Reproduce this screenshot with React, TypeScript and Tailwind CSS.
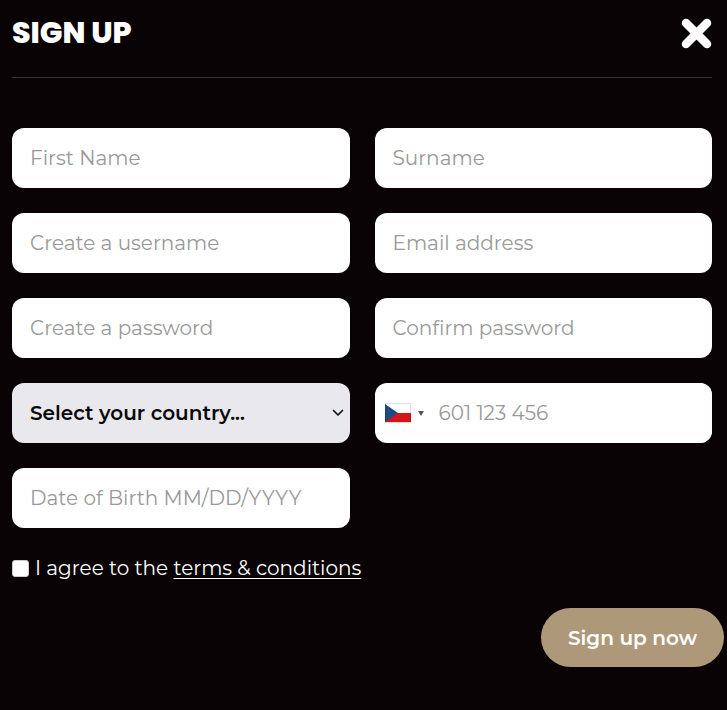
import type { InputHTMLAttributes } from "react";

const fieldClass =
  "h-[60px] w-full min-w-0 rounded-xl bg-white px-[18px] text-xl text-black outline-none placeholder:text-[#999] placeholder:opacity-100";

function Field({ label, ...rest }: { label: string } & InputHTMLAttributes<HTMLInputElement>) {
  return <input aria-label={label} placeholder={label} className={fieldClass} {...rest} />;
}

function CzechFlag() {
  return (
    <svg width="26" height="20" viewBox="0 0 26 20" aria-hidden="true">
      <rect width="26" height="20" fill="#fff" />
      <rect y="10" width="26" height="9" fill="#d7141a" />
      <path d="M0 1 L13 10 L0 19Z" fill="#1d4a80" />
      <rect x="0.5" y="0.5" width="25" height="19" fill="none" stroke="#000" strokeOpacity="0.12" />
    </svg>
  );
}

function PhoneField() {
  return (
    <div className="flex h-[60px] min-w-0 items-center rounded-xl bg-white">
      <button
        type="button"
        aria-label="Country code: Czech Republic"
        className="flex h-full shrink-0 items-center gap-[7px] pr-[15px] pl-2.5"
      >
        <CzechFlag />
        <svg width="6" height="5" viewBox="0 0 6 5" aria-hidden="true">
          <path d="M0 0H6L3 5Z" fill="#555" />
        </svg>
      </button>
      <input
        type="tel"
        aria-label="Phone number"
        placeholder="601 123 456"
        className="h-full w-full min-w-0 rounded-xl bg-white text-xl text-black outline-none placeholder:text-[#999] placeholder:opacity-100"
      />
    </div>
  );
}

export default function App() {
  return (
    <main className="min-h-screen bg-[#0a0305] pr-[15px] pl-3 font-['Montserrat','Inter',sans-serif] text-white">
      <header className="flex h-[78px] items-start justify-between border-b border-[#383335] pt-[15px]">
        <h1 className="font-['Poppins','Inter',sans-serif] text-[30px] leading-9 font-extrabold">SIGN UP</h1>
        <button type="button" aria-label="Close" className="pt-[3px]">
          <svg width="31" height="31" viewBox="0 0 31 31" aria-hidden="true">
            <path
              d="M5 5L26 26M26 5L5 26"
              stroke="#fff"
              strokeWidth="8.5"
              strokeLinecap="round"
            />
          </svg>
        </button>
      </header>

      <form className="pt-[50px]" onSubmit={(e) => e.preventDefault()}>
        <div className="grid grid-cols-2 gap-[25px]">
          <Field label="First Name" type="text" />
          <Field label="Surname" type="text" />
          <Field label="Create a username" type="text" />
          <Field label="Email address" type="email" />
          <Field label="Create a password" type="password" />
          <Field label="Confirm password" type="password" />
          <div className="grid min-w-0 items-center">
            <select
              aria-label="Country"
              className="col-start-1 row-start-1 h-[60px] w-full min-w-0 appearance-none rounded-xl bg-[#e9e9ed] px-[18px] text-xl font-semibold text-[#08080a] outline-none"
            >
              <option>Select your country...</option>
              <option>Czech Republic</option>
            </select>
            <svg
              width="12"
              height="8"
              viewBox="0 0 12 8"
              aria-hidden="true"
              className="pointer-events-none col-start-1 row-start-1 mr-1.5 justify-self-end"
            >
              <path d="M1.5 1.5L6 6L10.5 1.5" fill="none" stroke="#111" strokeWidth="1.7" strokeLinecap="round" strokeLinejoin="round" />
            </svg>
          </div>
          <PhoneField />
          <Field label="Date of Birth MM/DD/YYYY" type="text" />
        </div>

        <div className="mt-[25px] flex items-center gap-1.5 text-xl leading-[30px]">
          <input
            id="terms"
            type="checkbox"
            className="size-[17px] appearance-none rounded-[3px] border border-[#ccc] bg-white checked:bg-[#b09a7b]"
          />
          <label htmlFor="terms">
            I agree to the{" "}
            <a href="#terms" className="underline decoration-1 underline-offset-3">
              terms &amp; conditions
            </a>
          </label>
        </div>

        <div className="-mr-3 flex justify-end pt-[25px] pb-10">
          <button type="submit" className="h-[59px] w-[183px] rounded-full bg-[#ae987a] text-xl font-semibold text-white">
            Sign up now
          </button>
        </div>
      </form>
    </main>
  );
}
